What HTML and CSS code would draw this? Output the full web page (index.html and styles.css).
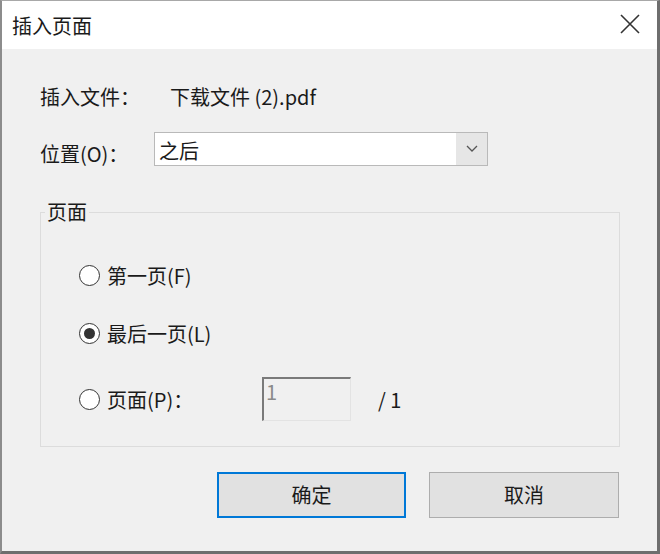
FILE: index.html
```html
<!DOCTYPE html>
<html>
<head>
<meta charset="utf-8">
<title>插入页面</title>
<link rel="stylesheet" href="styles.css">
</head>
<body>
<div class="dialog">
  <div class="titlebar">
    <span class="title">插入页面</span>
    <svg class="close" width="20" height="20" viewBox="0 0 20 20">
      <path d="M1 1 L19 19 M19 1 L1 19" stroke="#333" stroke-width="1.6" fill="none"/>
    </svg>
  </div>
  <div class="content">
    <div class="row row-file">
      <span class="label label-file">插入文件：</span>
      <span class="value">下载文件 (2).pdf</span>
    </div>
    <div class="row row-pos">
      <span class="label label-pos">位置(O)：</span>
      <div class="select">
        <span class="select-text">之后</span>
        <span class="select-btn">
          <svg width="12" height="8" viewBox="0 0 12 8">
            <path d="M1 1 L6 6 L11 1" stroke="#555" stroke-width="1.3" fill="none"/>
          </svg>
        </span>
      </div>
    </div>
    <fieldset class="group">
      <legend>页面</legend>
      <div class="radio-row first">
        <span class="radio"></span>
        <span>第一页(F)</span>
      </div>
      <div class="radio-row second">
        <span class="radio checked"></span>
        <span>最后一页(L)</span>
      </div>
      <div class="radio-row third">
        <span class="radio"></span>
        <span class="page-label">页面(P)：</span>
        <span class="page-input">1</span>
        <span class="page-total">/ 1</span>
      </div>
    </fieldset>
    <div class="buttons">
      <span class="btn btn-ok">确定</span>
      <span class="btn">取消</span>
    </div>
  </div>
</div>
</body>
</html>
```

FILE: styles.css
```css
html, body {
  margin: 0;
  padding: 0;
}

body {
  font-family: "Noto Sans CJK SC", "Noto Sans", sans-serif;
  font-size: 20px;
  color: #1a1a1a;
}

.dialog {
  box-sizing: border-box;
  width: 660px;
  height: 554px;
  border-top: 1px solid #a8a8a8;
  border-left: 2px solid #8c8c8c;
  border-right: 3px solid #6e6e6e;
  border-bottom: 3px solid #6e6e6e;
  display: flex;
  flex-direction: column;
}

.titlebar {
  height: 48px;
  background: #fff;
  display: flex;
  align-items: center;
  justify-content: space-between;
  padding: 0 17px 0 10px;
}

.title {
  line-height: 24px;
  margin-top: 2px;
}

.close {
  margin-top: -2px;
}

.content {
  flex: 1;
  background: #f0f0f0;
  padding: 0 37px 0 38px;
}

.row {
  display: flex;
  align-items: center;
  height: 34px;
}

.row-file {
  margin-top: 31px;
}

.row-pos {
  margin-top: 18px;
}

.label {
  line-height: 24px;
}

.label-file {
  width: 130px;
}

.label-pos {
  width: 114px;
  padding-top: 10px;
}

.value {
  line-height: 24px;
}

.select {
  box-sizing: border-box;
  width: 334px;
  height: 34px;
  border: 1px solid #b9b9b9;
  background: #fff;
  display: flex;
}

.select-text {
  flex: 1;
  padding-left: 4px;
  line-height: 34px;
  margin-top: 1px;
}

.select-btn {
  width: 31px;
  background: #e6e6e6;
  display: flex;
  align-items: center;
  justify-content: center;
}

.group {
  margin: 35px 0 0 0;
  padding: 0 0 25px 0;
  border: 1px solid #dcdcdc;
}

.group legend {
  margin-left: 4px;
  padding: 0 2px;
  line-height: 22px;
}

.radio-row {
  display: flex;
  align-items: center;
  height: 30px;
  padding-left: 38px;
}

.radio-row.first {
  margin-top: 37px;
}

.radio-row.second {
  margin-top: 28px;
}

.radio-row.third {
  margin-top: 29px;
  height: 44px;
}

.radio {
  box-sizing: border-box;
  width: 21px;
  height: 21px;
  border: 1.6px solid #333;
  border-radius: 50%;
  background: #fff;
  margin-right: 7px;
  display: flex;
  align-items: center;
  justify-content: center;
}

.radio.checked::after {
  content: "";
  width: 11px;
  height: 11px;
  border-radius: 50%;
  background: #333;
}

.page-label {
  width: 155px;
}

.page-input {
  box-sizing: border-box;
  width: 89px;
  height: 44px;
  border-top: 2px solid #7a7a7a;
  border-left: 2px solid #7a7a7a;
  border-right: 1px solid #e3e3e3;
  border-bottom: 1px solid #e3e3e3;
  color: #8a8a8a;
  line-height: 26px;
  padding-left: 2px;
}

.page-total {
  margin-left: 27px;
}

.buttons {
  display: flex;
  justify-content: flex-end;
  gap: 23px;
  margin-top: 25px;
  padding-right: 1px;
}

.btn {
  box-sizing: border-box;
  width: 190px;
  height: 46px;
  border: 1px solid #adadad;
  background: #e1e1e1;
  display: flex;
  align-items: center;
  justify-content: center;
  line-height: 24px;
}

.btn-ok {
  width: 189px;
  border: 2px solid #0078d7;
}
```
